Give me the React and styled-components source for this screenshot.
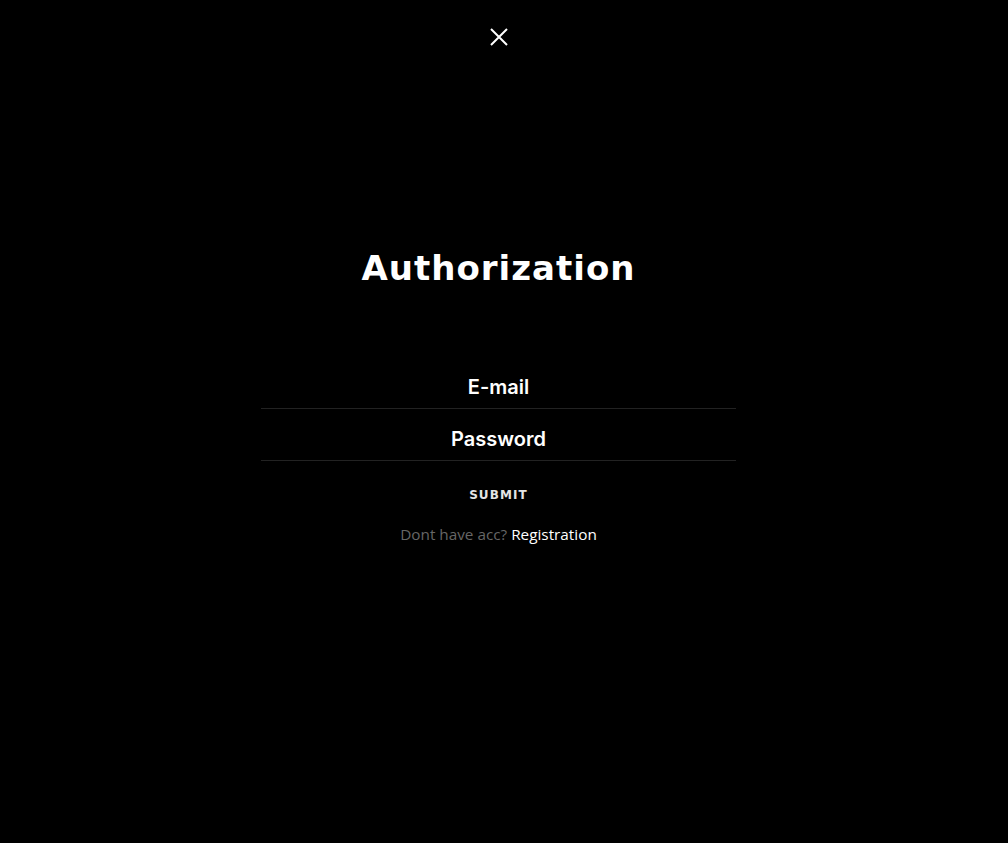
import styled, { createGlobalStyle } from "styled-components";

const GlobalStyle = createGlobalStyle`
  html, body {
    margin: 0;
    padding: 0;
    background: #000;
  }
  body {
    min-height: 843px;
    font-family: "Open Sans", "Liberation Sans", sans-serif;
  }
`;

const Page = styled.div`
  width: 997px;
  min-height: 843px;
  display: flex;
  flex-direction: column;
  align-items: center;
  background: #000;
`;

const CloseButton = styled.button`
  margin-top: 27px;
  width: 20px;
  height: 20px;
  padding: 0;
  border: none;
  background: transparent;
  cursor: pointer;
  display: flex;
  align-items: center;
  justify-content: center;
`;

const Title = styled.h1`
  margin: 201px 0 0;
  font-family: "DejaVu Sans", sans-serif;
  font-weight: 700;
  font-size: 34px;
  line-height: 40px;
  color: #fff;
  letter-spacing: 1px;
`;

const Form = styled.form`
  margin-top: 69px;
  width: 475px;
  display: flex;
  flex-direction: column;
  align-items: center;
`;

const Input = styled.input`
  width: 100%;
  box-sizing: border-box;
  height: 52px;
  padding: 8px 0 0;
  background: transparent;
  border: none;
  border-bottom: 1px solid #222;
  outline: none;
  text-align: center;
  color: #fff;
  font-family: "Inter", sans-serif;
  font-weight: 600;
  font-size: 20px;
  &::placeholder {
    color: #fff;
    opacity: 1;
  }
`;

const Submit = styled.button`
  margin-top: 26px;
  padding: 0;
  background: transparent;
  border: none;
  color: #e4e4e4;
  font-family: "DejaVu Sans", sans-serif;
  font-weight: 700;
  font-size: 12px;
  letter-spacing: 1.1px;
  line-height: 16px;
  cursor: pointer;
`;

const Hint = styled.p`
  margin: 21px 0 0;
  font-family: "Open Sans", sans-serif;
  font-size: 15.3px;
  line-height: 20px;
  color: #666;
`;

const Link = styled.a`
  color: #fff;
  text-decoration: none;
  cursor: pointer;
`;

export default function App() {
  return (
    <>
      <GlobalStyle />
      <Page>
        <CloseButton type="button" aria-label="close">
          <svg width="18" height="18" viewBox="0 0 18 18">
            <path d="M1 1L17 17M17 1L1 17" stroke="#fff" strokeWidth="2" />
          </svg>
        </CloseButton>
        <Title>Authorization</Title>
        <Form onSubmit={(e) => e.preventDefault()}>
          <Input type="email" placeholder="E-mail" />
          <Input type="password" placeholder="Password" />
          <Submit type="submit">SUBMIT</Submit>
          <Hint>
            Dont have acc? <Link>Registration</Link>
          </Hint>
        </Form>
      </Page>
    </>
  );
}
